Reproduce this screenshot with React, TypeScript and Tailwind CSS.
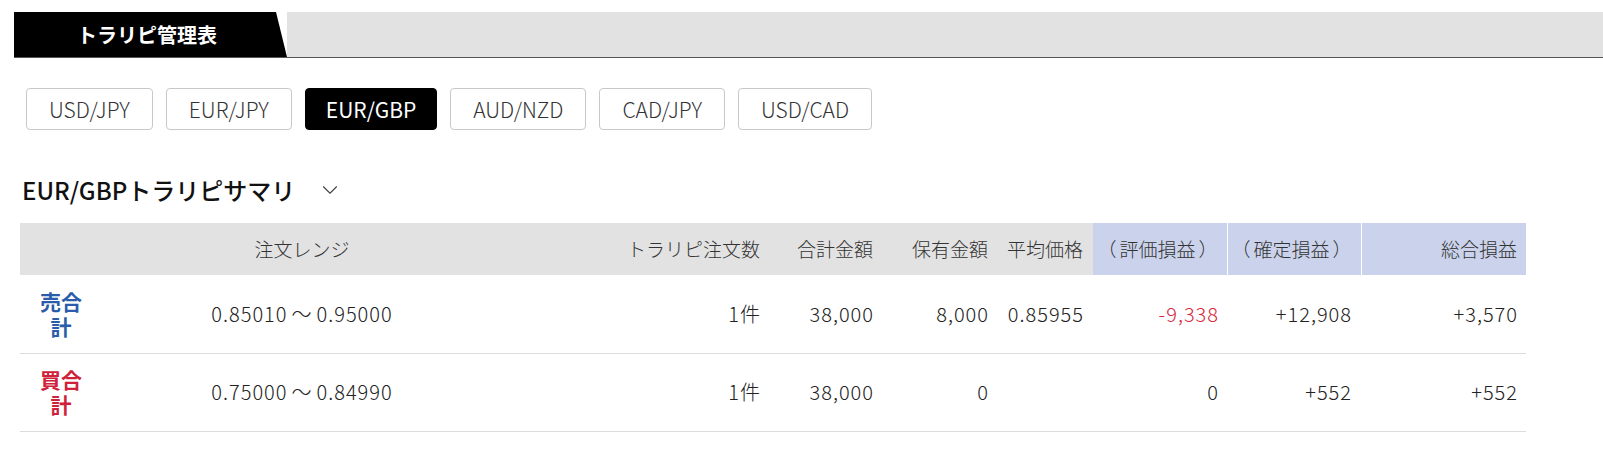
import { ChevronDown } from 'lucide-react';

const pairs = ['USD/JPY', 'EUR/JPY', 'EUR/GBP', 'AUD/NZD', 'CAD/JPY', 'USD/CAD'];

const rows = [
  {
    label: '売合計',
    labelColor: 'text-[#2a5caa]',
    from: '0.85010',
    to: '0.95000',
    count: '1件',
    total: '38,000',
    held: '8,000',
    avg: '0.85955',
    unrealized: '-9,338',
    unrealizedColor: 'text-[#d7263d]',
    realized: '+12,908',
    overall: '+3,570',
  },
  {
    label: '買合計',
    labelColor: 'text-[#cf2139]',
    from: '0.75000',
    to: '0.84990',
    count: '1件',
    total: '38,000',
    held: '0',
    avg: '',
    unrealized: '0',
    unrealizedColor: 'text-[#222]',
    realized: '+552',
    overall: '+552',
  },
];

export default function App() {
  return (
    <div
      className="w-[1603px] h-[469px] bg-white text-[#222] overflow-hidden [text-spacing-trim:space-all]"
      style={{ fontFamily: '"Noto Sans CJK JP", "Noto Sans", sans-serif' }}
    >
      {/* page header bar */}
      <div className="pt-[12px] pl-[14px]">
        <div className="flex h-[46px] bg-[#e2e2e2] border-b border-[#555]">
          <div className="w-[273px] bg-white">
            <div className="h-full bg-black flex items-center pl-[63px] [clip-path:polygon(0_0,262px_0,273px_100%,0_100%)]">
              <span className="text-white font-bold text-[20px] leading-none">トラリピ管理表</span>
            </div>
          </div>
        </div>
      </div>

      {/* currency pair tabs */}
      <div className="flex gap-[13px] pl-[26px] pt-[30px]">
        {pairs.map((p) => (
          <button
            key={p}
            className={`h-[42px] rounded-[4px] border text-[21px] leading-none ${
              p === 'EUR/GBP'
                ? 'px-[20px] bg-black border-black text-white font-normal'
                : 'px-[22px] bg-white border-[#c8c8c8] text-[#333] font-light'
            }`}
          >
            {p}
          </button>
        ))}
      </div>

      {/* summary title */}
      <div className="flex items-center pl-[22px] pt-[47px] pb-[20px]">
        <h2 className="text-[24px] font-medium text-[#111] leading-[26px]">EUR/GBPトラリピサマリ</h2>
        <ChevronDown className="ml-[22px] text-[#444]" size={26} strokeWidth={1} />
      </div>

      {/* summary table */}
      <div className="pl-[20px]">
        <table className="w-[1506px] table-fixed border-collapse text-[20px] font-light">
          <colgroup>
            <col className="w-[82px]" />
            <col className="w-[400px]" />
            <col className="w-[268px]" />
            <col className="w-[113px]" />
            <col className="w-[115px]" />
            <col className="w-[95px]" />
            <col className="w-[134px]" />
            <col className="w-[134px]" />
            <col className="w-[165px]" />
          </colgroup>
          <thead>
            <tr className="h-[52px] text-[19px] text-[#333] whitespace-nowrap">
              <th className="bg-[#e2e2e2]" />
              <th className="bg-[#e2e2e2] font-light text-center">注文レンジ</th>
              <th className="bg-[#e2e2e2] font-light text-right pr-[10px]">トラリピ注文数</th>
              <th className="bg-[#e2e2e2] font-light text-right pr-[10px]">合計金額</th>
              <th className="bg-[#e2e2e2] font-light text-right pr-[10px]">保有金額</th>
              <th className="bg-[#e2e2e2] font-light text-right pr-[10px]">平均価格</th>
              <th className="bg-[#cbd3ec] font-light text-right pr-[9px] border-r border-white">
                （<span className="mx-[3px]">評価損益</span>）
              </th>
              <th className="bg-[#cbd3ec] font-light text-right pr-[9px] border-r border-white">
                （<span className="mx-[3px]">確定損益</span>）
              </th>
              <th className="bg-[#cbd3ec] font-light text-right pr-[9px]">総合損益</th>
            </tr>
          </thead>
          <tbody className="tracking-[1px]">
            {rows.map((r) => (
              <tr key={r.label} className="h-[78px] border-b border-[#dcdcdc] whitespace-nowrap">
                <td
                  className={`px-[18px] text-center font-bold text-[21px] leading-[25px] tracking-normal whitespace-normal ${r.labelColor}`}
                >
                  {r.label}
                </td>
                <td className="text-center">
                  {r.from}
                  <span className="mx-[4px]">〜</span>
                  {r.to}
                </td>
                <td className="text-right pr-[9px]">{r.count}</td>
                <td className="text-right pr-[9px]">{r.total}</td>
                <td className="text-right pr-[9px]">{r.held}</td>
                <td className="text-right pr-[9px]">{r.avg}</td>
                <td className={`text-right pr-[8px] ${r.unrealizedColor}`}>{r.unrealized}</td>
                <td className="text-right pr-[9px]">{r.realized}</td>
                <td className="text-right pr-[8px]">{r.overall}</td>
              </tr>
            ))}
          </tbody>
        </table>
      </div>
    </div>
  );
}
